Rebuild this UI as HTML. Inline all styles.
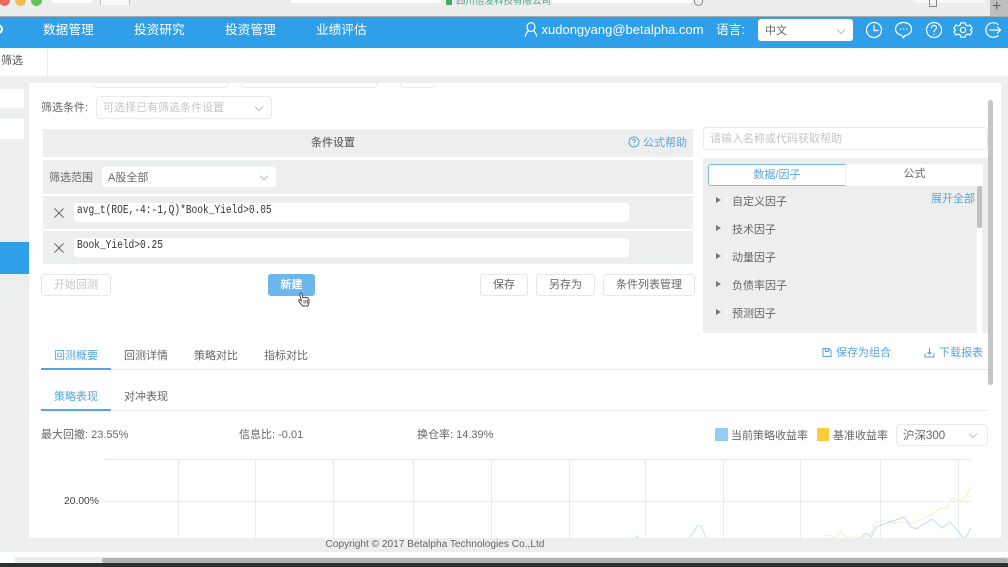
<!DOCTYPE html>
<html lang="zh">
<head>
<meta charset="utf-8">
<title>筛选</title>
<style>
html,body{margin:0;padding:0;width:1008px;height:567px;overflow:hidden;background:#fff}
body{position:relative;font-family:"Liberation Sans","Noto Sans CJK SC",sans-serif;font-size:11px;color:#666}
.a{position:absolute;box-sizing:border-box}
.t{position:absolute;white-space:nowrap;line-height:16px}
.m{position:absolute;white-space:nowrap;line-height:16px;font-family:'Liberation Mono','DejaVu Sans Mono',monospace;font-size:11.500px;color:#333;transform:scaleX(.83);transform-origin:0 0}
.btn{position:absolute;box-sizing:border-box;height:22px;border:1px solid #e6e8e8;border-radius:3px;background:#fff;text-align:center;line-height:20px;color:#666}
.blue{color:#55a5e0}
.grey{background:#edefee}
.chev{position:absolute;width:5px;height:5px;border-right:1px solid #bbb;border-bottom:1px solid #bbb;transform:rotate(45deg)}
.tri{position:absolute;left:716px;width:0;height:0;border-left:5px solid #777;border-top:3.5px solid transparent;border-bottom:3.5px solid transparent}
.nav{position:absolute;top:21px;color:#fff;font-size:12.7px;line-height:18px;white-space:nowrap}
</style>
</head>
<body>
<!-- browser chrome -->
<div class="a" style="left:0;top:0;width:1008px;height:16px;background:#eceeed"></div>
<div class="a" style="left:0;top:16px;width:1008px;height:1px;background:#a9abab"></div>
<div class="a" style="left:-1px;top:-5px;width:11px;height:11px;border-radius:50%;background:#ee6a5f"></div>
<div class="a" style="left:15px;top:-5px;width:11px;height:11px;border-radius:50%;background:#f5bd4f"></div>
<div class="a" style="left:31px;top:-5px;width:11px;height:11px;border-radius:50%;background:#61c454"></div>
<div class="a" style="left:52px;top:0;width:40px;height:3px;background:#fff"></div>
<div class="a" style="left:100px;top:0;width:30px;height:5px;border-left:1px solid #bbb;border-right:1px solid #bbb;background:#f8f8f8"></div>
<div class="a" style="left:291px;top:0;width:150px;height:3px;background:#fff"></div>
<div class="a" style="left:552px;top:0;width:140px;height:3px;background:#fff"></div>
<div class="a" style="left:446px;top:0;width:6px;height:5px;background:#3dab6b"></div>
<div class="t" style="left:456px;top:-6px;color:#4fa98a;font-size:9.500px">四川倍发科技有限公司</div>
<div class="a" style="left:694px;top:0;width:9px;height:6px;border:1px solid #888;border-top:0;border-radius:0 0 5px 5px"></div>
<div class="a" style="left:915px;top:0;width:70px;height:3px;background:#f8f8f8"></div>
<div class="a" style="left:929px;top:0;width:8px;height:7px;border:1px solid #888;border-top:0"></div>
<div class="a" style="left:990px;top:0;width:18px;height:16px;background:#bdbfbf"></div>
<div class="t" style="left:992px;top:-1px;color:#666;font-size:16px">+</div>

<!-- top nav -->
<div class="a" style="left:0;top:17px;width:1008px;height:31px;background:#2f9fe9"></div>
<div class="a" style="left:-7px;top:24px;width:10px;height:10px;border:2px solid #fff;border-radius:50%"></div>
<div class="nav" style="left:43px">数据管理</div>
<div class="nav" style="left:134px">投资研究</div>
<div class="nav" style="left:225px">投资管理</div>
<div class="nav" style="left:316px">业绩评估</div>
<svg class="a" style="left:524px;top:22px" width="14" height="16" viewBox="0 0 14 16" fill="none" stroke="#fff" stroke-width="1.2"><ellipse cx="7" cy="5" rx="4" ry="4.4"/><path d="M4.600 8.600C3 10 1.600 12.400 1.200 14.600M9.400 8.600c1.600 1.400 3 3.800 3.400 6"/></svg>
<div class="nav" style="left:541.500px;font-size:13px">xudongyang@betalpha.com</div>
<div class="nav" style="left:716px">语言:</div>
<div class="a" style="left:758px;top:19px;width:95px;height:22px;background:#fff;border-radius:3px"></div>
<div class="t" style="left:765px;top:23px;color:#666">中文</div>
<div class="chev" style="left:838px;top:27px"></div>
<svg class="a" style="left:864px;top:20px" width="144" height="20" viewBox="0 0 144 20" fill="none" stroke="#fff" stroke-width="1.2" stroke-linecap="round">
<circle cx="10" cy="10" r="7.500"/><path d="M10 5.500V10.500H14"/>
<path d="M39.500 2.500c4.600 0 8 2.900 8 6.500s-3.400 6.500-6.600 6.500l-1.400 2.200-2-2.500c-3.400-.6-6-3-6-6.200 0-3.600 3.400-6.500 8-6.500z"/><path d="M36.500 9h.3M39.500 9h.3M42.500 9h.3"/>
<circle cx="70" cy="10" r="7.500"/><path d="M67.500 7.800c0-1.500 1.100-2.400 2.500-2.400s2.500.9 2.500 2.200c0 1.900-2.500 2-2.500 4.100M70 14.300v.2"/>
<g transform="translate(1 0)"><path d="M96 2.800h4l.8 2.100 2.200.9 2.100-.8 2 3.300-1.500 1.700 1.500 1.700-2 3.300-2.100-.8-2.200.9-.8 2.100h-4l-.8-2.100-2.200-.9-2.100.8-2-3.300 1.500-1.700-1.500-1.700 2-3.300 2.100.8 2.200-.9z"/><circle cx="98" cy="10" r="2.600"/></g>
<path d="M134 4.500a7.300 7.300 0 1 0 0 11M126 10h10.500M133.500 7l3 3-3 3"/>
</svg>

<!-- sub bar -->
<div class="t" style="left:1px;top:53px;color:#555">筛选</div>
<div class="a" style="left:47px;top:48px;width:1px;height:28px;background:#eceeee"></div>

<!-- page background -->
<div class="a grey" style="left:0;top:76px;width:1008px;height:476px"></div>
<div class="a" style="left:0;top:89px;width:24px;height:19px;background:#fff"></div>
<div class="a" style="left:0;top:119px;width:24px;height:20px;background:#fff"></div>
<div class="a" style="left:0;top:242px;width:29px;height:32px;background:#2f9fe9"></div>

<!-- main panel -->
<div class="a" style="left:29px;top:83px;width:972px;height:455px;background:#fff;overflow:hidden">
  <div class="a" style="left:64px;top:-10px;width:136px;height:15px;border:1px solid #e8eaea;border-radius:4px"></div>
  <div class="a" style="left:212px;top:-10px;width:136px;height:15px;border:1px solid #e8eaea;border-radius:4px"></div>
  <div class="a" style="left:371px;top:-10px;width:35px;height:15px;border:1px solid #e8eaea;border-radius:4px"></div>
</div>
<div class="a" style="left:988px;top:100px;width:5px;height:285px;background:#c4c5c5;border-radius:3px"></div>

<div class="t" style="left:41px;top:100px">筛选条件:</div>
<div class="a" style="left:96px;top:96px;width:176px;height:23px;border:1px solid #e8eaea;border-radius:4px"></div>
<div class="t" style="left:103px;top:100px;color:#c4c6c6">可选择已有筛选条件设置</div>
<div class="chev" style="left:256px;top:104px"></div>

<!-- conditions -->
<div class="a grey" style="left:43px;top:129px;width:650px;height:28px"></div>
<div class="t" style="left:311px;top:135px;font-weight:500">条件设置</div>
<svg class="a" style="left:628px;top:136px" width="12" height="12" viewBox="0 0 12 12" fill="none" stroke="#55a5e0"><circle cx="6" cy="6" r="5"/><path d="M4.500 4.800c0-1 .7-1.500 1.500-1.500s1.500.6 1.500 1.300c0 1.100-1.500 1.200-1.500 2.400M6 8.500v.6"/></svg>
<div class="t blue" style="left:643px;top:135px">公式帮助</div>

<div class="a grey" style="left:43px;top:160px;width:650px;height:34px"></div>
<div class="t" style="left:49px;top:170px">筛选范围</div>
<div class="a" style="left:102px;top:167px;width:174px;height:20px;background:#fff;border-radius:3px"></div>
<div class="t" style="left:108px;top:170px">A股全部</div>
<div class="chev" style="left:261px;top:173px"></div>

<div class="a grey" style="left:43px;top:196px;width:650px;height:33px"></div>
<svg class="a" style="left:54px;top:208px" width="10" height="10" viewBox="0 0 10 10" stroke="#666" fill="none"><path d="M.5.500l9 9M9.500.500l-9 9"/></svg>
<div class="a" style="left:74px;top:203px;width:555px;height:19px;background:#fff;border-radius:3px"></div>
<div class="m" style="left:76.500px;top:203px">avg_t(ROE,-4:-1,Q)*Book_Yield&gt;0.05</div>

<div class="a grey" style="left:43px;top:231px;width:650px;height:33px"></div>
<svg class="a" style="left:54px;top:243px" width="10" height="10" viewBox="0 0 10 10" stroke="#666" fill="none"><path d="M.5.500l9 9M9.500.500l-9 9"/></svg>
<div class="a" style="left:74px;top:238px;width:555px;height:19px;background:#fff;border-radius:3px"></div>
<div class="m" style="left:76.500px;top:238px">Book_Yield&gt;0.25</div>

<!-- buttons -->
<div class="btn" style="left:41px;top:274px;width:70px;color:#c4c6c6">开始回测</div>
<div class="btn" style="left:268px;top:274px;width:47px;background:#6db6ec;border-color:#6db6ec;color:#fff;font-weight:700">新建</div>
<svg class="a" style="left:297px;top:292px" width="14" height="16" viewBox="0 0 14 16"><path d="M3 1.500c.8-.8 1.800-.3 2 .6l.8 3.600c1.500-.7 5.500-.3 6 1.500.4 2 .2 4.800-1 6.800H5.500L1.800 9.200c-.6-1 .5-1.900 1.500-1.200l1 .9L2.900 3c-.1-.6-.1-1.100.1-1.500z" fill="#fff" stroke="#444" stroke-width="1"/><path d="M7 8v3.500M8.800 8v3.500M10.500 8v3.500" stroke="#444" stroke-width=".8"/></svg>
<div class="btn" style="left:480px;top:274px;width:48px">保存</div>
<div class="btn" style="left:536px;top:274px;width:59px">另存为</div>
<div class="btn" style="left:603px;top:274px;width:92px">条件列表管理</div>

<!-- right column -->
<div class="a" style="left:703px;top:127px;width:285px;height:23px;background:#fff;border:1px solid #e8eaea;border-radius:4px"></div>
<div class="t" style="left:710px;top:131px;color:#c4c6c6">请输入名称或代码获取帮助</div>
<div class="a grey" style="left:703px;top:158px;width:285px;height:175px"></div>
<div class="a" style="left:708px;top:164px;width:138px;height:22px;background:#fff;border:1px solid #7dbbe8;border-right-color:#e8f2fa;border-radius:3px 0 0 3px;text-align:center;line-height:20px;color:#55a5e0">数据/因子</div>
<div class="a" style="left:846px;top:164px;width:137px;height:22px;background:#fff;border-radius:0 3px 3px 0;text-align:center;line-height:20px;color:#666">公式</div>
<div class="a" style="left:977px;top:186px;width:5px;height:147px;background:#fff"></div>
<div class="a" style="left:977px;top:186px;width:5px;height:42px;background:#c0c1c1;border-radius:2px"></div>
<div class="t blue" style="left:931px;top:191px">展开全部</div>
<div class="tri" style="top:197px"></div><div class="t" style="left:732px;top:194px">自定义因子</div>
<div class="tri" style="top:225px"></div><div class="t" style="left:732px;top:222px">技术因子</div>
<div class="tri" style="top:253px"></div><div class="t" style="left:732px;top:250px">动量因子</div>
<div class="tri" style="top:281px"></div><div class="t" style="left:732px;top:278px">负债率因子</div>
<div class="tri" style="top:309px"></div><div class="t" style="left:732px;top:306px">预测因子</div>

<!-- tabs -->
<div class="a" style="left:41px;top:369px;width:947px;height:1px;background:#e8eaea"></div>
<div class="a" style="left:41px;top:368px;width:70px;height:2px;background:#55a5e0"></div>
<div class="t blue" style="left:54px;top:348px">回测概要</div>
<div class="t" style="left:124px;top:348px">回测详情</div>
<div class="t" style="left:194px;top:348px">策略对比</div>
<div class="t" style="left:264px;top:348px">指标对比</div>
<svg class="a" style="left:822px;top:347px" width="10" height="11" viewBox="0 0 10 11" fill="none" stroke="#55a5e0"><path d="M1 1.500v8h8v-6l-2-2zM3.500 1.500v3h3v-3"/></svg>
<div class="t blue" style="left:836px;top:345px">保存为组合</div>
<svg class="a" style="left:924px;top:347px" width="11" height="11" viewBox="0 0 11 11" fill="none" stroke="#55a5e0"><path d="M1 6.500v3.500h9V6.500M5.500 1v6M3.500 5l2 2 2-2"/></svg>
<div class="t blue" style="left:939px;top:345px">下载报表</div>

<div class="a" style="left:41px;top:410px;width:947px;height:1px;background:#e8eaea"></div>
<div class="a" style="left:41px;top:409px;width:70px;height:2px;background:#55a5e0"></div>
<div class="t blue" style="left:54px;top:389px">策略表现</div>
<div class="t" style="left:124px;top:389px">对冲表现</div>

<div class="t" style="left:41px;top:427px">最大回撤: 23.55%</div>
<div class="t" style="left:239px;top:427px">信息比: -0.01</div>
<div class="t" style="left:417px;top:427px">换仓率: 14.39%</div>

<div class="a" style="left:715px;top:428px;width:13px;height:13px;background:#93cbf3"></div>
<div class="t" style="left:731px;top:428px">当前策略收益率</div>
<div class="a" style="left:817px;top:428px;width:12px;height:13px;background:#fdcc3a"></div>
<div class="t" style="left:833px;top:428px">基准收益率</div>
<div class="a" style="left:896px;top:424px;width:92px;height:22px;background:#fff;border:1px solid #e8eaea;border-radius:4px"></div>
<div class="t" style="left:903px;top:428px;font-size:11.500px">沪深300</div>
<div class="chev" style="left:970px;top:431px"></div>

<!-- chart -->
<svg class="a" style="left:0;top:455px" width="1008" height="83" viewBox="0 455 1008 83" fill="none">
<g stroke="#e9ebeb" stroke-width="1">
<path d="M105 459.500H971M105 501.500H971"/>
<path d="M178.500 459V538M255.500 459V538M333.500 459V538M413.500 459V538M491.500 459V538M569.500 459V538M645.500 459V538M723.500 459V538M800.500 459V538M880.500 459V538M958.500 459V538"/>
</g>
<polyline stroke="#f5ecc5" stroke-width="1" points="824,536 829,535 834,538 841,532 846,537 851,536 854,538 866,537 871,533 876,522 886,520 892,523 899,522 906,522 912,524 931,515 941,508 946,509 952,498 959,501 966,497 971,487"/>
<polyline stroke="#bcdcf3" stroke-width="1" points="862,537 866,533 871,537 876,527 887,523 904,517 911,527 916,529 932,519 942,528 950,522 959,532 962,538 966,537 971,528"/>
<polyline stroke="#c4e0f5" stroke-width="1" points="689,538 694,532 697,526 701,526 704,533 706,538"/>
<path d="M636 538l1-2 1 2" stroke="#c4e0f5"/>
</svg>
<div class="t" style="left:64px;top:494px;color:#444;font-size:10.300px">20.00%</div>

<!-- footer -->
<div class="t" style="left:325.500px;top:537px;font-size:10.150px;color:#666">Copyright © 2017 Betalpha Technologies Co.,Ltd</div>
<div class="a" style="left:0;top:552px;width:1008px;height:5px;background:#fff"></div>
<div class="a" style="left:15px;top:557px;width:993px;height:6px;background:#eceeed"></div>
<div class="a" style="left:102px;top:558px;width:906px;height:5px;background:#b2b3b3;border-radius:2px"></div>
<div class="a" style="left:0;top:563px;width:1008px;height:4px;background:#2b3230"></div>
</body>
</html>
